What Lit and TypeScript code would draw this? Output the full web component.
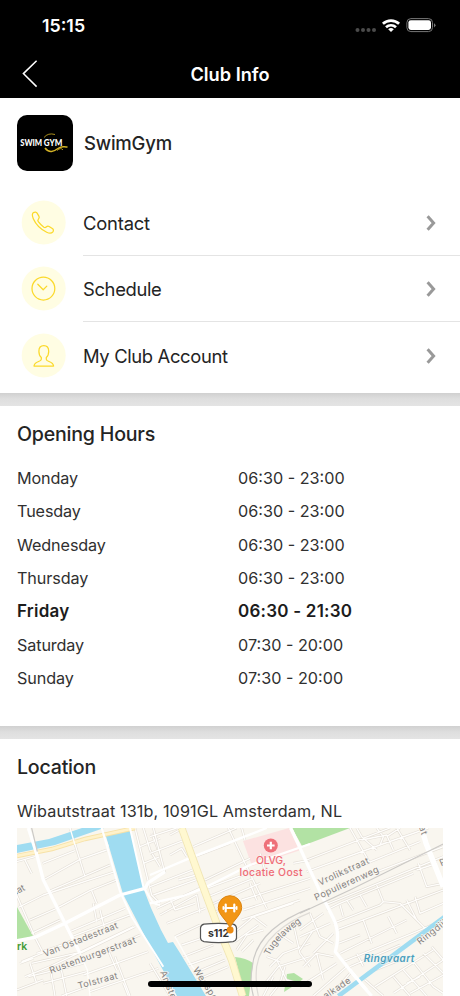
import { LitElement, html, svg, css } from "lit";
import { customElement, property } from "lit/decorators.js";

/** Vector city map; street groups are drawn at three units per pixel. */
@customElement("club-map")
class ClubMap extends LitElement {
  static styles = css`
    :host { display: block; width: 426px; height: 168px; }
    svg { display: block; width: 100%; height: 100%; overflow: hidden; }
    text { font-family: Inter, "Liberation Sans", sans-serif; }
    .case { fill: none; stroke: #e3ded6; stroke-width: 7.5; stroke-linejoin: round; }
    .minor { fill: none; stroke: #fffefc; stroke-width: 4; stroke-linejoin: round; }
    .main { fill: none; stroke: #fff; stroke-width: 10; stroke-linejoin: round; }
    .rail { fill: none; stroke: #cbc9c6; stroke-width: 3.5; }
    .label text { font-size: 27.5px; fill: #85827f; stroke: #faf7f1; stroke-width: 4px; paint-order: stroke; }
    .water { fill: #9fdcf1; }
    .green { fill: #b2e2a4; }
    .med { fill: #ee6b75; font-weight: 500; font-size: 10.4px; text-anchor: middle; stroke: #fbf3ef; stroke-width: 1px; paint-order: stroke; }
    .park { fill: #3f9b35; font-weight: 600; font-size: 10.5px; }
    .label .canal { fill: #4a9dbb; font-weight: 600; font-style: italic; font-size: 29.5px; stroke: #eef6f6; stroke-width: 3px; paint-order: stroke; }
    .shield { font-size: 10.5px; font-weight: 700; fill: #333; }
  `;

  private streets(origin: string, d: string) {
    return svg`<g transform=${`translate(${origin}) scale(.33333)`}>
      <path class="case" d=${d}></path><path class="minor" d=${d}></path></g>`;
  }

  render() {
    const west =
      "M128 130L225 92M130 180L240 118L320 90M145 215L330 135M55 262L130 225L345 155M90 300L170 265L270 212L350 180M95 340L180 300M210 24L255 170M275 212L290 250M280 250L290 305M75 120L95 160M50 125L105 110M50 225L105 352L130 400M65 425L220 360M90 430L110 490M75 470L150 440L400 320M50 510L130 480M110 400L200 370M210 335L375 265M215 350L390 285M240 400L405 320M250 420L420 345M250 465L445 395M270 515L475 445M150 440L165 528M180 430L200 528M60 430L100 415M95 430L250 395M85 470L250 430M130 490L260 455M185 528L262 500M320 380L350 450M345 410L390 528M370 490L385 528M405 24L455 225L480 250M430 24L450 90L480 140M420 80L480 55M430 130L480 110M455 40L475 90M460 250L480 245M300 270L315 330";
    const centre =
      "M0 50L80 24M0 100L100 62M60 105L95 85L110 110M10 24L45 160M130 80L260 24M135 110L240 70M0 200L140 145M10 225L150 175M20 265L160 200M165 180L300 115M170 205L320 150M175 230L310 175M180 255L330 190M185 280L210 270M30 285L140 225L150 280M50 310L165 265M60 235L75 270L135 250M75 350L150 315M95 375L170 350M100 410L190 375M115 435L215 400M130 460L225 420M140 480L235 440M235 24L290 140L350 265M275 24L285 60M275 240L480 175M280 270L480 205M275 300L450 240M250 340L310 290L430 250M255 365L325 315M260 390L290 345L340 330M310 290L350 320M275 395L310 360M300 190L320 240M430 130L480 120M360 440L400 400L480 370M345 490L385 440L480 410M340 528L370 470M380 420L410 480L480 500M430 310L450 400L480 440M400 350L430 370M405 440L390 490L360 528M85 180L140 165M100 24L60 45M0 430L60 528M330 100L350 170M350 410L390 425";
    const east =
      "M20 120L150 70L270 24M20 155L240 75L385 24M150 24L210 130M170 24L185 50L230 90M185 60L260 45L280 90M240 75L250 50L230 24M260 50L300 24M290 24L330 90M55 190L200 130L360 65M60 220L430 80M75 255L430 110M355 130L380 200L430 190M350 150L410 130M230 195L250 245L300 250L390 340M80 270L120 250L180 225L340 160M100 310L240 255L250 245M110 330L270 270L430 210M115 370L180 345M120 400L200 360L320 300M130 425L350 335L430 300M180 225L200 260M190 300L215 370M265 290L290 340M320 240L350 300M345 230L360 280L430 250M120 255L130 290M140 240L160 270M0 330L70 280M0 350L90 310M30 280L60 350L100 370M0 390L40 330M40 400L100 340M10 440L50 400L100 410M0 500L110 430M40 528L140 440M90 528L150 460M50 400L70 480M150 440L300 375M170 400L190 440M200 460L300 420M195 480L250 528M225 500L400 390M280 470L330 528M310 450L380 528M340 425L400 500L430 520M370 400L430 460M395 380L430 420M280 520L430 420M330 520L430 465M320 490L360 470";
    return html`<svg viewBox="17 828 426 168">
      <rect x="17" y="828" width="426" height="168" fill="#f9f6ef"></rect>
      <path fill="#fce2e1" d="M243 841L289 828L301 850L252 866Z"></path>
      <g class="green">
        <path d="M292 828H350L302 846Z"></path>
        <path d="M17 907L33 936L17 941Z"></path>
        <path d="M235 957Q246 958 253 963L249 996H245Z"></path>
        <path d="M287 974L294 973L303 979L295 985L284 992Z"></path>
      </g>
      ${this.streets("0 820", west)}${this.streets("150 820", centre)}${this.streets("300 820", east)}
      <g class="water">
        <path d="M17 845L49 839L82 828H104L55 845L17 853Z"></path>
        <path d="M105 833L130 828L144 890L151 908L161 930L168 943L173 942L180 953L206 996H177L151 948L123 894Z"></path>
      </g>
      <path d="M17 856L52 849L85 839L135 828" fill="none" stroke="#f7e2a8" stroke-width="4.4"></path>
      <path d="M17 856L52 849L85 839L135 828" fill="none" stroke="#fff2cb" stroke-width="2.8"></path>
      <g transform="translate(0 820) scale(.33333)">
        <path class="main" d="M50 362L105 352L195 310L360 225L435 205L445 188L495 155"></path>
        <path class="main" d="M85 24L108 95L130 180L195 310L240 400"></path>
        <path class="minor" d="M240 400L262 450L270 528M210 24L225 75M305 24L325 80"></path>
        <path class="main" style="stroke-width:6" d="M305 24L360 215L395 290L490 440M390 24L430 200L460 250L480 255"></path>
        <path class="rail" d="M95 24L112 95"></path>
      </g>
      <g transform="translate(150 820) scale(.33333)">
        <path class="main" style="stroke-width:7" d="M0 165L130 110L270 55L350 24M0 250L100 228L160 205L300 135L480 72"></path>
        <path class="minor" d="M75 350L120 430L195 528"></path>
        <path fill="none" stroke="#f1e6b4" stroke-width="23" d="M95 24L148 170L200 310L245 420L278 528"></path>
        <path fill="none" stroke="#fff8d0" stroke-width="18" d="M95 24L148 170L200 310L245 420L278 528"></path>
        <path class="rail" d="M480 265C400 295 315 350 307 440Q298 490 310 528"></path>
        <path class="rail" style="stroke:#dedbd6" d="M480 278C410 305 332 360 320 440Q315 490 325 528"></path>
      </g>
      <g transform="translate(300 820) scale(.33333)">
        <path class="main" d="M-28 24L5 95L60 215L100 295Q122 340 106 395L180 488L215 528"></path>
        <path class="main" style="stroke-width:16" d="M365 24L378 70L430 200"></path>
        <path class="rail" d="M0 280L150 210L430 72"></path>
        <path fill="none" stroke="#9fdcf1" stroke-width="14" d="M435 290L115 528"></path>
        <path class="main" d="M150 450L200 510"></path>
      </g>
      <g class="label">
        <g transform="translate(0 820) scale(.33333)">
          <text transform="translate(134 411) rotate(-21.5)" textLength="238">Van Ostadestraat</text>
          <text transform="translate(152 461) rotate(-20)" textLength="274">Rustenburgerstraat</text>
          <text transform="translate(236 507) rotate(-15)" textLength="123">Tolstraat</text>
          <text transform="translate(42 228) rotate(-28)">aat</text>
        </g>
        <g transform="translate(150 820) scale(.33333)">
          <path id="curve" d="M358 408Q386 350 474 294" fill="none"></path>
          <text textLength="141"><textPath href="#curve">Tugelaweg</textPath></text>
          <text transform="translate(128 449) rotate(57)" letter-spacing="1.5">Weesperzijde</text>
          <text transform="translate(30 457) rotate(68)" letter-spacing="1.5">Amsteldijk</text>
        </g>
        <g transform="translate(300 820) scale(.33333)">
          <text transform="translate(60 197) rotate(-24.500)" textLength="164">Vrolikstraat</text>
          <text transform="translate(48 242) rotate(-24.500)" textLength="209">Populierenweg</text>
          <text transform="translate(360 375) rotate(-38)" letter-spacing="1.500">Ringdijk</text>
          <text transform="translate(77 538) rotate(-34)" letter-spacing="1.500">alkade</text>
          <text transform="translate(352 5) rotate(73)" letter-spacing="1.500">aat</text>
          <text transform="translate(424 139) rotate(-24)">P</text>
          <text class="canal" transform="translate(191 425)" textLength="152">Ringvaart</text>
        </g>
      </g>
      <text class="park" x="17" y="950">rk</text>
      <circle cx="270.8" cy="845.5" r="7" fill="#ee7079"></circle>
      <path d="M270.8 841.7V849.3M267 845.5H274.6" stroke="#fff" stroke-width="2.2"></path>
      <text class="med" x="271" y="864.3" textLength="30">OLVG,</text>
      <text class="med" x="271" y="876" textLength="63">locatie Oost</text>
      <path d="M204 924.2Q218.5 922.4 233 924.2Q236.2 925 236.5 928V938Q236.2 941 233 941.6Q218.5 943.8 204 941.6Q200.8 941 200.5 938V928Q200.8 925 204 924.2Z" fill="#fff" stroke="#555" stroke-width="1.2"></path>
      <text class="shield" x="208" y="936.5" textLength="21">s112</text>
      <circle cx="230.2" cy="930" r="3.4" fill="#ed8b12"></circle>
      <path d="M230 928C227 920 218.3 915 218.3 907.4A11.7 11.7 0 0 1 241.7 907.4C241.7 915 233 920 230 928Z" fill="#f29615" stroke="#dc8410" stroke-width="1"></path>
      <path d="M225 908H235M225.7 904.6V911.4M234.3 904.6V911.4" stroke="#fff" stroke-width="2.2" stroke-linecap="round" fill="none"></path>
      <path d="M223.3 906.8V909.200M236.700 906.800V909.200" stroke="#fff" stroke-width="1.600" stroke-linecap="round"></path>
    </svg>`;
  }
}

const icons = {
  phone: svg`<path d="M33.4 22.6C34.8 21.7 36.3 21.9 37.1 23.2L39 26.4C39.6 27.5 39.2 28.3 38.3 29.3C37.6 30.1 37.7 30.8 38.3 31.7C40 34 41.6 35.6 43.9 37.2C44.8 37.8 45.4 37.7 46.2 37C47.2 36.1 48.1 35.9 49.1 36.5L52.3 38.5C53.6 39.3 53.7 40.6 52.9 41.8C51.4 43.7 49.1 43.4 46.7 42.2C41.2 39.5 35.8 34.3 33.3 28.7C32.2 26.1 31.6 24 33.4 22.6Z"></path>`,
  clock: svg`<circle cx="43.4" cy="32.6" r="11.4"></circle><path d="M37.8 28.2L43.2 33.8L46.8 30.1"></path>`,
  user: svg`<path d="M41.3 36.2V34.6C39.4 33 38.9 30.8 38.9 28.2C38.9 24.7 40.8 22.5 43.8 22.5S48.7 24.7 48.7 28.2C48.7 30.8 48.2 33 46.3 34.6V36.2C46.3 37.5 47.3 37.9 49 38.5C52 39.5 53.3 40.4 53.6 43H34C34.3 40.4 35.6 39.5 38.6 38.5C40.3 37.9 41.3 37.5 41.3 36.2Z"></path>`,
};

@customElement("menu-row")
class MenuRow extends LitElement {
  @property() icon: keyof typeof icons = "phone";
  static styles = css`
    :host { display: flex; height: 66.6px; box-sizing: border-box; }
    .glyph { width: 83px; flex: none; height: 66px; margin-top: .5px; }
    .outline { fill: none; stroke: #fbd92a; stroke-width: 1.25; stroke-linejoin: round; stroke-linecap: round; }
    .body { flex: 1; display: flex; align-items: center; justify-content: space-between; padding: 1.500px 24px 0 0; border-bottom: 1px solid #e4e4e4; }
    :host([last]) .body { border-color: transparent; }
    .label { font-size: 18.4px; line-height: 24px; letter-spacing: var(--track, -.2px); }
    .chevron { width: 10px; height: 16px; fill: none; stroke: #999; stroke-width: 3; }
  `;
  render() {
    return html`<svg class="glyph" viewBox="0 0 83 66">
        <circle cx="43.7" cy="32.5" r="22" fill="#fffde3"></circle>
        <g class="outline">${icons[this.icon]}</g>
      </svg>
      <div class="body"><span class="label"><slot></slot></span>
        <svg class="chevron" viewBox="0 0 10 16"><path d="M1.600 1.300L7.600 8L1.600 14.700"></path></svg></div>`;
  }
}

const hours = [
  ["Monday", "06:30 - 23:00"], ["Tuesday", "06:30 - 23:00"], ["Wednesday", "06:30 - 23:00"],
  ["Thursday", "06:30 - 23:00"], ["Friday", "06:30 - 21:30"], ["Saturday", "07:30 - 20:00"], ["Sunday", "07:30 - 20:00"],
];

@customElement("app-root")
class AppRoot extends LitElement {
  static styles = css`
    :host { display: block; width: 460px; height: 996px; overflow: hidden; position: relative; background: #fff; color: #242424; font-family: Inter, "Liberation Sans", sans-serif; }
    header { height: 98px; background: #000; color: #fff; }
    .status { height: 50px; display: flex; align-items: center; justify-content: space-between; padding: 0 24px 0 42px; box-sizing: border-box; }
    .time { font-size: 17.8px; font-weight: 600; line-height: 22px; padding-top: 1px; }
    .signals { width: 82px; height: 20px; }
    .nav { height: 48px; display: grid; grid-template-columns: 60px 1fr 60px; align-items: center; }
    .back { width: 60px; height: 48px; fill: none; stroke: #fff; stroke-width: 1.5; }
    .title { font-size: 18.2px; font-weight: 600; text-align: center; line-height: 24px; }
    .club { height: 91px; display: flex; align-items: center; gap: 11px; padding: 0 0 2px 17px; box-sizing: border-box; }
    .logo { width: 56px; height: 56px; }
    .logo text { font-family: Lato, sans-serif; font-weight: 900; font-size: 9px; fill: #fff; }
    .name { font-size: 18.5px; font-weight: 500; letter-spacing: -.2px; }
    .menu { height: 204px; }
    .wide { --track: -.35px; }
    .divider { height: 13px; background: linear-gradient(#d0d0d0, #dedede 45%, #e4e4e4); }
    h2 { margin: 0; font-size: 19.6px; font-weight: 500; line-height: 28px; letter-spacing: -.22px; }
    .hours { height: 320px; box-sizing: border-box; padding: 14px 17px 0; }
    .table { padding-top: 13.500px; }
    .line { display: grid; grid-template-columns: 221px 1fr; height: 33.3px; align-items: center; font-size: 16.2px; color: #303030; }
    .line span:first-child { letter-spacing: -.12px; }
    .today { font-weight: 600; color: #1c1c1c; font-size: 17px; }
    .line.today span { letter-spacing: .23px; }
    .location { padding: 14px 17px 0; }
    .address { margin: 19px 0 6px; height: 22px; font-size: 16.2px; line-height: 22px; white-space: nowrap; color: #303030; letter-spacing: .1px; }
    .home { position: absolute; left: 148px; top: 981px; width: 164px; height: 5.5px; border-radius: 3px; background: #000; }
  `;

  render() {
    return html`
      <header>
        <div class="status"><span class="time">15:15</span>
          <svg class="signals" viewBox="354 15 82 20">
            <g fill="#4b4b4b"><circle cx="357.5" cy="30" r="2"></circle><circle cx="363" cy="30" r="2"></circle><circle cx="368.5" cy="30" r="2"></circle><circle cx="374" cy="30" r="2"></circle></g>
            <g fill="none" stroke="#fff" stroke-width="2.7"><path d="M382.9 23.8A11.8 11.8 0 0 1 399.1 23.8"></path><path d="M386 27.2A7.4 7.4 0 0 1 396 27.2"></path></g>
            <path fill="#fff" d="M388.2 29.200A4.3 4.3 0 0 1 393.8 29.200L391 32Z"></path>
            <rect x="406.9" y="18.6" width="25.600" height="13" rx="4" fill="none" stroke="#777" stroke-width="1"></rect>
            <rect x="408.400" y="20.200" width="22.600" height="9.800" rx="2.400" fill="#fff"></rect>
            <path fill="#777" d="M434 23.2Q437 25.2 434 27.4Z"></path>
          </svg></div>
        <div class="nav"><svg class="back" viewBox="0 0 60 48"><path d="M36.6 10.7L23.4 23.6L36.6 36.6"></path></svg>
          <span class="title">Club Info</span></div>
      </header>
      <div class="club">
        <svg class="logo" viewBox="17 114 56 56"><rect x="17" y="114" width="56" height="56" rx="10"></rect>
          <g fill="none" stroke="#d5b426"><path d="M44 136.500Q48 131.500 55 133.500" stroke-width=".8"></path><path d="M45 147C49 152.500 54 150.500 58 147.500S63 146 67.500 146" stroke-width="1.5"></path><path d="M57 149.500Q61 146 63 149" stroke-width=".8"></path></g>
          <text x="20.200" y="145.300" textLength="22" lengthAdjust="spacingAndGlyphs">SWIM</text><text x="43.800" y="145.300" textLength="18.500" lengthAdjust="spacingAndGlyphs">GYM</text></svg>
        <span class="name">SwimGym</span>
      </div>
      <div class="menu">
        <menu-row icon="phone">Contact</menu-row>
        <menu-row icon="clock" class="wide">Schedule</menu-row>
        <menu-row icon="user" class="wide" last>My Club Account</menu-row>
      </div>
      <div class="divider"></div>
      <section class="hours"><h2>Opening Hours</h2>
        <div class="table">${hours.map(([day, time]) => html`<div class="line ${day === "Friday" ? "today" : ""}"><span>${day}</span><span>${time}</span></div>`)}</div>
      </section>
      <div class="divider"></div>
      <section class="location"><h2>Location</h2>
        <p class="address">Wibautstraat 131b, 1091GL Amsterdam, NL</p>
        <club-map></club-map>
      </section>
      <div class="home"></div>`;
  }
}
